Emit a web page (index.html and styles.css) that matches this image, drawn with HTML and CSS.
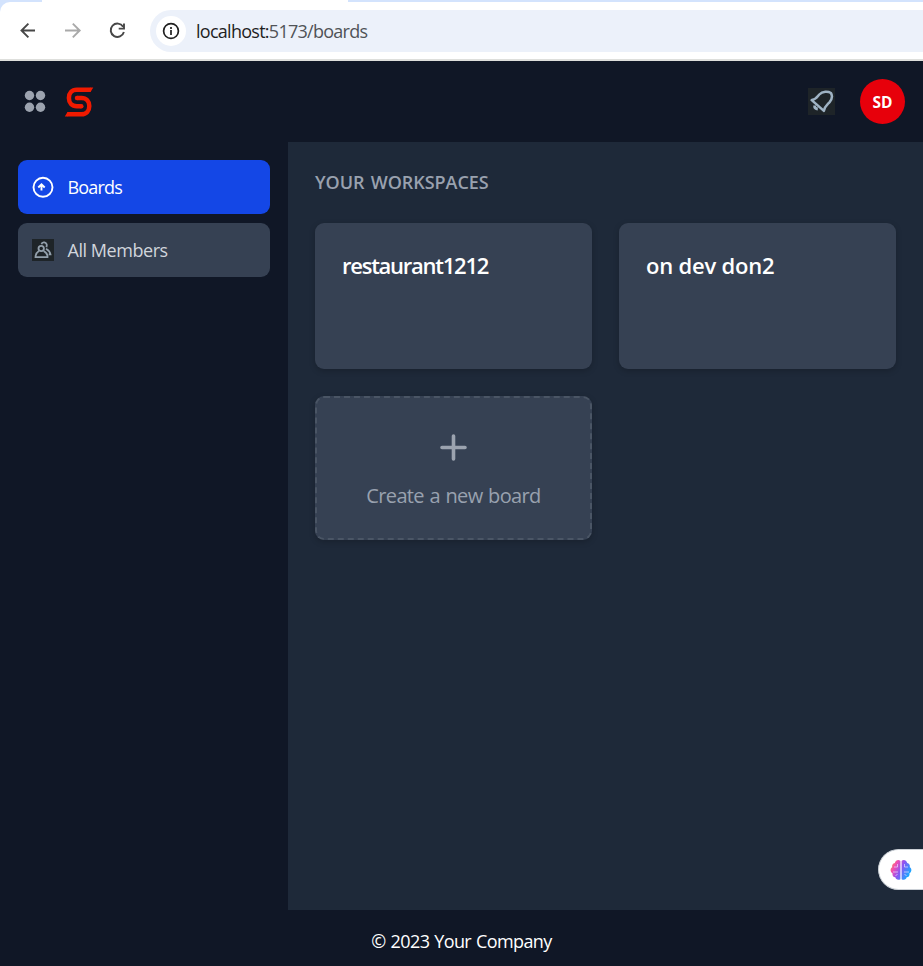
FILE: index.html
```html
<!DOCTYPE html>
<html lang="en">
<head>
<meta charset="utf-8">
<title>Boards</title>
<link rel="stylesheet" href="styles.css">
</head>
<body>
<div class="browser">
  <div class="toolbar">
    <svg class="nav-icons" width="130" height="24" viewBox="0 0 130 24" fill="none" stroke-width="1.9">
      <path d="M21 12.500H8M14.400 5.600 7.500 12.500l6.900 6.900" stroke="#474747"/>
      <path d="M51 12.500h14M58.800 5.600 65.700 12.500l-6.900 6.900" stroke="#a9a9a9"/>
      <path d="M109.100 8.700A6.700 6.700 0 1 0 109.900 14M110 5.500v5.100h-5.300" stroke="#474747"/>
    </svg>
    <div class="address">
      <span class="info"><svg width="18" height="18" viewBox="0 0 18 18"><circle cx="9" cy="9" r="7.400" fill="none" stroke="#1f1f1f" stroke-width="1.700"/><path d="M9 8v5M9 5v1.900" stroke="#1f1f1f" stroke-width="1.700"/></svg></span>
      <span class="url">localhost:<span class="path">5173/boards</span></span>
    </div>
  </div>
</div>
<header class="header">
  <svg class="apps" width="22" height="22" viewBox="0 0 22 22" fill="#9ca3af"><circle cx="5.500" cy="5.500" r="4.700"/><circle cx="16.500" cy="5.500" r="4.700"/><circle cx="5.500" cy="17.300" r="4.700"/><circle cx="16.500" cy="17.300" r="4.700"/></svg>
  <svg class="logo" width="30" height="32" viewBox="0 0 30 32"><path d="M26.500 3.800H12.800C7.800 3.800 4.900 7.300 4.900 12c0 4.900 3 8.200 7.900 8.200h4.500M13 11.900h4.500c4.900 0 7.800 3.400 7.800 8 0 4.900-2.900 8.400-7.800 8.400H3.500" fill="none" stroke="#f01a00" stroke-width="4.500"/><circle cx="17.300" cy="20.200" r="2.250" fill="#f01a00"/><circle cx="13" cy="11.900" r="2.250" fill="#f01a00"/><path d="M26 1.550h3.300l-2.800 4.500H26ZM4 30.550H.8l2.700-4.500H4Z" fill="#f01a00"/></svg>
  <svg class="bell" width="27" height="27" viewBox="0 0 27 27" fill="none"><path fill="#1e2428" d="M0 0h27v27H0z"/><path d="M3.700 12.100C8 11.600 9.300 8.800 11.300 6.500c3.200-3.500 8.900-3.300 11.600-1.500 1.700 2.800.9 6.500-1.300 9.100-2.700 2.900-5.200 4.500-5.700 8.800Z" stroke="#9fb3c4" stroke-width="2.500" stroke-linejoin="round"/><path d="M6.600 17.500q-.2 3.300 3.200 3.500" stroke="#9fb3c4" stroke-width="2.800"/></svg>
  <div class="avatar">SD</div>
</header>
<div class="content">
  <nav class="sidebar">
    <a class="item active"><svg width="22" height="22" viewBox="0 0 22 22" fill="none" stroke="#fff" stroke-width="1.900"><circle cx="11" cy="11.300" r="9.500"/><path d="M9.500 14.500V8.500M6.300 11.500 9.500 8.300l3.200 3.200"/></svg><span class="boards-label">Boards</span></a>
    <a class="item"><svg width="22" height="22" viewBox="0 0 22 22" fill="none" stroke="#93a0ac" stroke-width="1.800"><path d="M0 0h22v22H0z" fill="#1e2428" stroke="none"/><circle cx="9.200" cy="9.500" r="2.700"/><path d="M6.800 12c-2 1.300-3.200 3.200-3.300 6.200h12c.2-3-1.500-4.900-3.800-6.200M9.500 5.200c.3-1.500 1.600-2 2.900-1.800 2.100.4 2.900 2.300 2 4.900M14 9.800c2.300 1.400 4.100 3.300 4.500 5.500h-1.800"/></svg><span class="members-label">All Members</span></a>
  </nav>
  <main class="main">
    <h2 class="heading">YOUR WORKSPACES</h2>
    <div class="grid">
      <section class="card"><h3 class="first-title">restaurant1212</h3></section>
      <section class="card"><h3 class="second-title">on dev don2</h3></section>
      <button class="create"><svg width="27" height="27" viewBox="0 0 27 27" fill="none" stroke="#9ca3af" stroke-width="3.600" stroke-linecap="round"><path d="M13.500 2v23M2 13.500h23"/></svg><span class="create-label">Create a new board</span></button>
    </div>
  </main>
</div>
<footer class="footer"><span class="copyright">© 2023 Your Company</span></footer>
<div class="assistant">
  <svg width="22" height="22" viewBox="0 0 22 22">
    <defs><linearGradient id="brain" x1="0" y1="0" x2="1" y2=".5"><stop offset="0" stop-color="#ffa02e"/><stop offset=".3" stop-color="#f04bb5"/><stop offset=".58" stop-color="#8a56f4"/><stop offset="1" stop-color="#1ba7ff"/></linearGradient></defs>
    <path fill="url(#brain)" d="M10.400 2v18.200c-2.300 1.300-4.700.3-5.100-1.900-2.200-.2-3.300-2.200-2.700-3.900C0 12.900 0 9.500 2.200 8.300 1.700 6 2.800 4.400 4.800 4 5.500 1.300 8.600.2 10.400 2Zm1.200 0v18.200c2.300 1.300 4.700.3 5.100-1.900 2.200-.2 3.300-2.200 2.700-3.900 2.600-1.500 2.600-4.900.4-6.100.5-2.300-.6-3.900-2.600-4.300-.7-2.700-3.800-3.800-5.600-2Z"/>
    <path d="M4 8h3.500V5M3 13h5M5.500 17l2-2M18 8h-3.500V5M19 13h-5M16.500 17l-2-2" fill="none" stroke="#e8dcff" stroke-width=".7"/>
  </svg>
</div>
</body>
</html>
```
FILE: styles.css
```css
* { box-sizing: border-box; }
body {
  margin: 0;
  height: 966px;
  display: flex;
  flex-direction: column;
  overflow: hidden;
  background: #101726;
  color: #fff;
  font-family: "Open Sans", "Noto Sans", sans-serif;
  font-size: 18px;
}
span { white-space: nowrap; }
svg { flex: none; display: block; }
h2, h3 { margin: 0; font-weight: 600; white-space: nowrap; }
.browser {
  height: 61px;
  flex: none;
  padding-top: 2px;
  background: linear-gradient(90deg, #d3e3fd 42px, #fff 42px 348px, #d3e3fd 348px) 0 0 / 100% 2px no-repeat, #d3e3fd;
}
.toolbar {
  height: 59px;
  display: flex;
  padding: 8px 0 0 14px;
  background: #fff;
  border-radius: 10px 0 0;
  border-bottom: 2px solid #dedfdc;
}
.nav-icons { margin: 8px 6px 0 0; }
.address {
  height: 42px;
  flex: 1;
  display: flex;
  align-items: center;
  padding-left: 6px;
  border-radius: 21px 0 0 21px;
  background: #ecf1fa;
}
.info {
  width: 30px;
  height: 30px;
  display: grid;
  place-items: center;
  margin-right: 10px;
  border-radius: 50%;
  background: #fff;
}
.url { color: #1f1f1f; letter-spacing: -.73px; }
.path { color: #505357; }
.header {
  height: 81px;
  flex: none;
  display: flex;
  align-items: center;
  padding: 0 18px 0 24px;
}
.apps { margin-bottom: 2px; }
.logo { margin-left: 18px; }
.bell { margin-left: auto; }
.avatar {
  width: 45px;
  height: 45px;
  margin-left: 25px;
  display: grid;
  place-items: center;
  border-radius: 50%;
  background: #e7000b;
  font-size: 15.500px;
  font-weight: 700;
}
.content { height: 768px; flex: none; display: flex; }
.sidebar {
  width: 288px;
  flex: none;
  display: flex;
  flex-direction: column;
  gap: 9px;
  padding: 18px;
}
.item {
  height: 54px;
  display: flex;
  align-items: center;
  gap: 13.500px;
  padding: 0 14px;
  border-radius: 9px;
  background: #364153;
  color: #d1d5dc;
}
.item.active { background: #1447e6; color: #fff; }
.boards-label { letter-spacing: -.8px; }
.members-label { letter-spacing: -.45px; }
.main { flex: 1; padding: 27px; background: #1e2939; }
.heading {
  height: 27px;
  margin-bottom: 27px;
  color: #99a1af;
  font-size: 18px;
  line-height: 27px;
  letter-spacing: -.04px;
  word-spacing: 1.500px;
}
.grid { display: grid; grid-template-columns: 277px 277px; gap: 27px; }
.card, .create {
  border-radius: 9px;
  background: #364153;
  box-shadow: 0 2px 6px #0003;
}
.card { height: 146px; padding: 27px; }
.card h3 { font-size: 22px; line-height: 30px; }
.card .first-title { letter-spacing: -1.25px; }
.card .second-title { letter-spacing: -.2px; }
.create {
  height: 144px;
  display: flex;
  flex-direction: column;
  align-items: center;
  padding: 36px 0 0;
  border: 2px dashed #4a5565;
  color: #99a1af;
  font: 20px/30px "Open Sans", "Noto Sans", sans-serif;
}
.create svg { margin-bottom: 20px; }
.create-label { letter-spacing: -.65px; word-spacing: 1px; }
.footer {
  height: 56px;
  flex: none;
  display: flex;
  align-items: center;
  justify-content: center;
  padding-top: 6px;
}
.copyright { letter-spacing: -.6px; word-spacing: .8px; }
.assistant {
  position: absolute;
  right: 0;
  top: 849px;
  width: 45px;
  height: 41px;
  padding: 9px 0 0 11px;
  border-radius: 21px 0 0 21px;
  border: 1px solid #cbd0d6;
  border-right: 0;
  background: #fff;
}
```
